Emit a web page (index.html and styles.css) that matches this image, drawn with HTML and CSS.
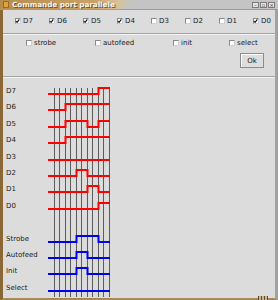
FILE: index.html
```html
<!DOCTYPE html>
<html lang="fr">
<head>
    <meta charset="UTF-8">
    <title>Commande port parallele</title>
    <link rel="stylesheet" href="styles.css">
</head>
<body>
    <div class="window">
        <div class="titlebar">
            <div class="title-tab">
                <span class="app-icon"></span>
                <span class="title">Commande port parallele</span>
            </div>
            <div class="title-fill"></div>
            <div class="win-buttons">
                <span class="win-btn">&#8211;</span>
                <span class="win-btn">&#9643;</span>
                <span class="win-btn">&#215;</span>
            </div>
        </div>

        <div class="frame">
            <div class="data-bits">
                <label class="check"><span class="box"><svg viewBox="0 0 6 6"><path d="M1 3 L2.5 4.6 L5.2 1"/></svg></span>D7</label>
                <label class="check"><span class="box"><svg viewBox="0 0 6 6"><path d="M1 3 L2.5 4.6 L5.2 1"/></svg></span>D6</label>
                <label class="check"><span class="box"><svg viewBox="0 0 6 6"><path d="M1 3 L2.5 4.6 L5.2 1"/></svg></span>D5</label>
                <label class="check"><span class="box"><svg viewBox="0 0 6 6"><path d="M1 3 L2.5 4.6 L5.2 1"/></svg></span>D4</label>
                <label class="check"><span class="box"></span>D3</label>
                <label class="check"><span class="box"></span>D2</label>
                <label class="check"><span class="box"></span>D1</label>
                <label class="check"><span class="box"><svg viewBox="0 0 6 6"><path d="M1 3 L2.5 4.6 L5.2 1"/></svg></span>D0</label>
            </div>

            <div class="separator"></div>

            <div class="controls">
                <div class="control-bits">
                    <label class="check"><span class="box"></span>strobe</label>
                    <label class="check"><span class="box"></span>autofeed</label>
                    <label class="check"><span class="box"></span>init</label>
                    <label class="check"><span class="box"></span>select</label>
                </div>
                <div class="ok-row">
                    <button class="ok">Ok</button>
                </div>
            </div>

            <div class="separator"></div>

            <svg class="chart" width="272" height="221" viewBox="3 75 272 221">
                <g class="grid">
                    <line x1="54.5" y1="86" x2="54.5" y2="295"/>
                    <line x1="59.5" y1="86" x2="59.5" y2="295"/>
                    <line x1="65.5" y1="86" x2="65.5" y2="295"/>
                    <line x1="70.5" y1="86" x2="70.5" y2="295"/>
                    <line x1="76.5" y1="86" x2="76.5" y2="295"/>
                    <line x1="81.5" y1="86" x2="81.5" y2="295"/>
                    <line x1="87.5" y1="86" x2="87.5" y2="295"/>
                    <line x1="92.5" y1="86" x2="92.5" y2="295"/>
                    <line x1="98.5" y1="86" x2="98.5" y2="295"/>
                    <line x1="103.5" y1="86" x2="103.5" y2="295"/>
                    <line x1="109.5" y1="86" x2="109.5" y2="295"/>
                </g>
                <g class="labels">
                    <text x="6" y="91">D7</text>
                    <text x="6" y="107">D6</text>
                    <text x="6" y="124">D5</text>
                    <text x="6" y="140">D4</text>
                    <text x="6" y="157">D3</text>
                    <text x="6" y="173">D2</text>
                    <text x="6" y="189">D1</text>
                    <text x="6" y="206">D0</text>
                    <text x="6" y="239">Strobe</text>
                    <text x="6" y="255">Autofeed</text>
                    <text x="6" y="271">Init</text>
                    <text x="6" y="288">Select</text>
                </g>
                <g class="data">
                    <path d="M48 92 H98.5 V86 H110"/>
                    <path d="M48 108 H65.5 V102 H110"/>
                    <path d="M48 125 H65.5 V119 H87.5 V125 H98.5 V119 H110"/>
                    <path d="M48 141 H65.5 V135 H110"/>
                    <path d="M48 158 H110"/>
                    <path d="M48 174 H76.5 V168 H87.5 V174 H110"/>
                    <path d="M48 190 H87.5 V184 H98.5 V190 H110"/>
                    <path d="M48 207 H98.5 V201 H110"/>
                </g>
                <g class="ctrl">
                    <path d="M48 240 H76.5 V234 H98.5 V240 H110"/>
                    <path d="M48 256 H76.5 V250 H87.5 V256 H110"/>
                    <path d="M48 272 H76.5 V266 H87.5 V272 H110"/>
                    <path d="M48 289 H110"/>
                </g>
            </svg>
        </div>
        <div class="grip"></div>
    </div>
</body>
</html>
```

FILE: styles.css
```css
body {
    margin: 0;
    background: #dcdcdc;
    font-family: "DejaVu Sans", sans-serif;
    font-size: 7px;
    color: #222;
}

.window {
    width: 278px;
    height: 300px;
    display: flex;
    flex-direction: column;
    position: relative;
    overflow: hidden;
}

/* title bar */
.titlebar {
    height: 10px;
    display: flex;
    background: #c4c4c4;
    border-bottom: 1px solid #9c9c9c;
    box-sizing: border-box;
}

.title-tab {
    width: 134px;
    display: flex;
    align-items: center;
    background: linear-gradient(to right, #b68d4f 0%, #c9a166 70%, #d8c29a 88%, #c4c4c4 100%);
    clip-path: polygon(0 0, 100% 0, 90% 100%, 0 100%);
}

.app-icon {
    width: 6px;
    height: 7px;
    margin-left: 3px;
    background: #e2a23a;
    border: 1px solid #9b6a22;
    box-sizing: border-box;
}

.title {
    margin-left: 3px;
    font-weight: bold;
    font-size: 7.2px;
    color: #fbf3e4;
    text-shadow: 1px 1px 0 #6e5330;
    white-space: nowrap;
    line-height: 9px;
}

.title-fill {
    flex: 1;
}

.win-buttons {
    display: flex;
    gap: 1px;
    padding: 2px 3px 0 0;
}

.win-btn {
    width: 7px;
    height: 6px;
    background: #e4e4e4;
    border: 1px solid #7a7a7a;
    box-sizing: border-box;
    font-size: 5px;
    line-height: 4px;
    text-align: center;
    color: #222;
    overflow: hidden;
}

/* window frame */
.frame {
    flex: 1;
    display: flex;
    flex-direction: column;
    border-left: 3px solid #8a6836;
    border-right: 3px solid #a2a2a2;
    border-bottom: 4px solid #a98a57;
    background: #dcdcdc;
}

.data-bits {
    height: 19px;
    display: grid;
    grid-template-columns: repeat(8, 34px);
    align-items: center;
    padding-top: 1px;
}

.data-bits .check {
    padding-left: 12px;
}

.check {
    display: flex;
    align-items: center;
    gap: 2px;
    white-space: nowrap;
}

.box {
    width: 6px;
    height: 6px;
    background: #fff;
    border-top: 1px solid #8a8a8a;
    border-left: 1px solid #8a8a8a;
    border-right: 1px solid #d0d0d0;
    border-bottom: 1px solid #d0d0d0;
    box-sizing: border-box;
    display: flex;
}

.box svg {
    width: 6px;
    height: 6px;
    margin: -1px 0 0 -1px;
}

.box path {
    fill: none;
    stroke: #111;
    stroke-width: 1.3;
}

.separator {
    height: 1px;
    margin-top: 3px;
    background: #a4a4a4;
    border-bottom: 1px solid #f4f4f4;
}

.controls {
    height: 38px;
    display: flex;
    flex-direction: column;
}

.control-bits {
    height: 16px;
    display: grid;
    grid-template-columns: 69px 78px 56px auto;
    align-items: center;
    padding-left: 23px;
}

.ok-row {
    display: flex;
    justify-content: flex-end;
    padding: 2px 11px 0 0;
}

.ok {
    width: 24px;
    height: 15px;
    padding: 0;
    font-family: "DejaVu Sans", sans-serif;
    font-size: 7px;
    color: #222;
    background: #dedede;
    border: 1px solid #8c8c8c;
    box-shadow: inset 1px 1px 0 #fff;
}

.chart {
    display: block;
    margin-top: -1px;
}

.grid line {
    stroke: #5c5c5c;
    stroke-width: 1;
}

.labels text {
    font-family: "DejaVu Sans", sans-serif;
    font-size: 7px;
    fill: #222;
}

.data path {
    fill: none;
    stroke: #f00;
    stroke-width: 2;
}

.ctrl path {
    fill: none;
    stroke: #0000f0;
    stroke-width: 2;
}

/* resize grip in the bottom border */
.grip {
    position: absolute;
    right: 10px;
    bottom: 0;
    width: 10px;
    height: 4px;
    background: repeating-linear-gradient(to right, #5a4a30 0 1px, #c9b48c 1px 3px);
}
```
